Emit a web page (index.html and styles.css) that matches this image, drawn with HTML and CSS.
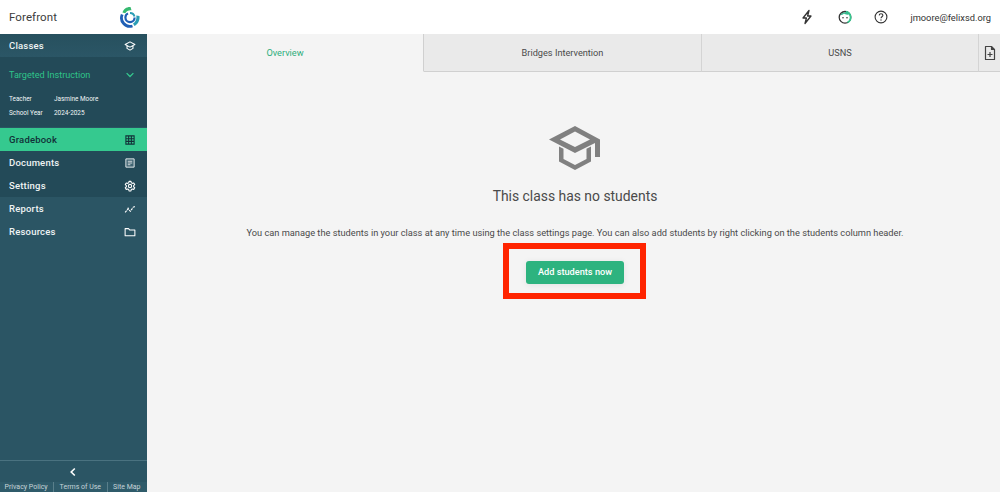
FILE: index.html
```html
<!DOCTYPE html>
<html lang="en">
<head>
<meta charset="utf-8">
<title>Forefront</title>
<link rel="stylesheet" href="styles.css">
</head>
<body>
<header class="topbar">
  <div class="brand">
    <span class="brand-name">Forefront</span>
    <svg class="logo" viewBox="0 0 22 22" width="22" height="22">
      <path d="M3.500 6.500C4.500 3 7.500 .8 11.500 1l1 3.200C9.500 3.900 7.500 5 6.300 7.200Z" fill="#35b96f"/>
      <path d="M3.200 8.500A8.500 8.500 0 0 0 13.500 20" fill="none" stroke="#1f5fb5" stroke-width="2.800"/>
      <circle cx="11" cy="11.500" r="4.600" fill="none" stroke="#1f5fb5" stroke-width="2.200" stroke-dasharray="19 10"/>
      <path d="M11 7a4.600 4.600 0 0 1 4.500 3.500" fill="none" stroke="#2a9db5" stroke-width="2"/>
      <path d="M15.500 20C19 18 21 14.500 20.500 10L17.300 9.400C18 13 16.500 16 14 17.500Z" fill="#2a9db5"/>
    </svg>
  </div>
  <div class="top-actions">
    <svg class="top-icon" viewBox="0 0 16 16"><path d="M10 1.500 4 9h3.400L6 14.500 12 7H8.600z" fill="none" stroke="#333" stroke-width="1.300" stroke-linejoin="round"/></svg>
    <svg class="top-icon top-icon-face" viewBox="0 0 16 16"><circle cx="8" cy="8.300" r="5.800" fill="none" stroke="#333" stroke-width="1.300"/><path d="M9 2.700A5.800 5.800 0 0 1 10.500 13.500" fill="none" stroke="#35c98f" stroke-width="1.700"/><path d="M3.400 6C5 3 10 1.800 12.800 5.300 10 6.200 8 5.500 7 4.500 6 5.700 4.800 6 3.400 6Z" fill="#35b98f"/><circle cx="6" cy="8.800" r=".8" fill="#333"/><circle cx="10" cy="8.800" r=".8" fill="#333"/></svg>
    <svg class="top-icon" viewBox="0 0 16 16"><circle cx="8" cy="8" r="5.900" fill="none" stroke="#333" stroke-width="1.100"/><path d="M6.200 6.400C6.300 5.300 7 4.700 8 4.700c1.100 0 1.900.7 1.900 1.600 0 1.400-1.900 1.500-1.900 3" fill="none" stroke="#333" stroke-width="1.100"/><circle cx="8" cy="11" r=".7" fill="#333"/></svg>
    <span class="user">jmoore@felixsd.org</span>
  </div>
</header>
<div class="shell">
  <aside class="sidebar">
    <nav class="nav">
      <a class="nav-row nav-classes">Classes
        <svg class="nav-icon" viewBox="0 0 16 16"><path d="M8 2.500 1.500 6 8 9.500 14.500 6z M4 7.500v3.700L8 13.500l4-2.300V7.500" fill="none" stroke="#fff" stroke-width="1.400" stroke-linejoin="round"/></svg>
      </a>
      <section class="class-block">
        <div class="class-title">Targeted Instruction
          <svg class="nav-icon" viewBox="0 0 16 16"><path d="M3.500 5.500 8 10l4.500-4.500" fill="none" stroke="#35c98f" stroke-width="1.700"/></svg>
        </div>
        <dl class="meta">
          <dt>Teacher</dt><dd>Jasmine Moore</dd>
          <dt>School Year</dt><dd>2024-2025</dd>
        </dl>
      </section>
      <a class="nav-row nav-active">Gradebook
        <svg class="nav-icon" viewBox="0 0 16 16"><path d="M2.500 2.500h11v11h-11z M2.500 6.200h11 M2.500 9.800h11 M6.200 2.500v11 M9.800 2.500v11" fill="none" stroke="#123038" stroke-width="1.400"/></svg>
      </a>
      <a class="nav-row nav-dark">Documents
        <svg class="nav-icon" viewBox="0 0 16 16"><path d="M2.500 2.500h11v11h-11z" fill="#3f6472" stroke="#e6ecee" stroke-width="1.300"/><path d="M5 5.700h6M5 8h6M5 10.300h3.500" stroke="#fff" stroke-width="1"/></svg>
      </a>
      <a class="nav-row nav-dark">Settings
        <svg class="nav-icon" viewBox="0 0 16 16"><path d="M6.700 1.800h2.600l.4 1.900 1.400.8 1.900-.6 1.300 2.200-1.500 1.300v1.600l1.500 1.300-1.300 2.200-1.900-.6-1.400.8-.4 1.900H6.700l-.4-1.900-1.400-.8-1.900.6-1.300-2.200 1.500-1.300V7.400L1.700 6.100 3 3.900l1.900.6 1.400-.8z" fill="none" stroke="#fff" stroke-width="1.400" stroke-linejoin="round"/><circle cx="8" cy="8" r="2.200" fill="none" stroke="#fff" stroke-width="1.400"/></svg>
      </a>
      <a class="nav-row">Reports
        <svg class="nav-icon" viewBox="0 0 16 16"><path d="M1.500 12.500 5.500 8l3 3 4-5.500" fill="none" stroke="#fff" stroke-width="1.500" stroke-dasharray="3 1"/><circle cx="5.500" cy="7" r="1" fill="#fff"/><circle cx="13.500" cy="5" r="1.100" fill="#fff"/></svg>
      </a>
      <a class="nav-row">Resources
        <svg class="nav-icon" viewBox="0 0 16 16"><path d="M1.500 3.500h4.500l1.500 1.700h7v7.800h-13z" fill="none" stroke="#fff" stroke-width="1.400" stroke-linejoin="round"/></svg>
      </a>
    </nav>
    <div class="side-foot">
      <div class="collapse"><svg viewBox="0 0 10 10" width="10" height="10"><path d="M6.800 1.500 3.200 5l3.600 3.500" fill="none" stroke="#fff" stroke-width="1.600"/></svg></div>
      <div class="legal"><span>Privacy Policy</span><span>Terms of Use</span><span>Site Map</span></div>
    </div>
  </aside>
  <main class="main">
    <div class="tabs">
      <div class="tab tab-active">Overview</div>
      <div class="tab">Bridges Intervention</div>
      <div class="tab">USNS</div>
      <div class="tab tab-add">
        <svg viewBox="0 0 16 16" width="16" height="16"><path d="M3.500 1.500h6l3 3v10h-9z M9.500 1.500v3h3 M8 7v5 M5.500 9.500h5" fill="none" stroke="#444" stroke-width="1.200" stroke-linejoin="round"/></svg>
      </div>
    </div>
    <div class="empty">
      <svg class="cap" viewBox="0 0 52 44" width="52" height="44">
        <path d="M26 0 0 13.500 26 27l20-10v14h5V13.500z M26 5.500 11 13.500 26 21l15-7.500z" fill="#808080" fill-rule="evenodd"/>
        <path d="M10 20.500v15L26 44l16-8.500v-15l-4.500 2.300v10.200L26 39 14.500 33V22.800z" fill="#808080"/>
      </svg>
      <h1 class="empty-title">This class has no students</h1>
      <p class="empty-text">You can manage the students in your class at any time using the class settings page. You can also add students by right clicking on the students column header.</p>
      <div class="callout"><button class="add-btn">Add students now</button></div>
    </div>
  </main>
</div>
</body>
</html>
```
FILE: styles.css
```css
* { box-sizing: border-box; }
html, body { margin: 0; height: 100%; }
body {
  width: 1000px;
  height: 492px;
  overflow: hidden;
  display: flex;
  flex-direction: column;
  font-family: Roboto, "Liberation Sans", sans-serif;
  color: #444;
  background: #f4f4f4;
}
.topbar {
  height: 34px;
  flex: none;
  background: #fff;
  display: flex;
  align-items: center;
  justify-content: space-between;
  padding: 0 9px;
}
.brand { width: 132px; display: flex; align-items: center; justify-content: space-between; }
.brand-name { font-size: 11.500px; color: #3c3c3c; letter-spacing: .1px; }
.logo { display: block; }
.top-actions { display: flex; align-items: center; }
.top-icon { width: 16px; height: 16px; margin-right: 21px; }
.top-icon:first-child { margin-right: 22px; }
.top-icon-face { margin-right: 20px; }
.user { font-size: 9.300px; color: #333; }
.shell { flex: 1; display: flex; min-height: 0; }
.sidebar {
  width: 147px;
  flex: none;
  background: #2b5564;
  display: flex;
  flex-direction: column;
  justify-content: space-between;
  color: #fff;
}
.nav-row {
  height: 23px;
  display: flex;
  align-items: center;
  justify-content: space-between;
  padding: 0 11px 0 9px;
  font-size: 9.500px;
  font-weight: 500;
  letter-spacing: .2px;
  color: #eef3f4;
}
.nav-icon { width: 12px; height: 12px; flex: none; }
.nav-classes { background: linear-gradient(#27505e, #2b5666); }
.class-block { height: 71px; background: #234a58; padding-top: 6px; border-bottom: 1px solid #2a5563; }
.class-title {
  display: flex;
  justify-content: space-between;
  align-items: center;
  padding: 0 11px 0 9px;
  height: 23px;
  font-size: 9.100px;
  color: #2fc48a;
}
.meta {
  margin: 9px 0 0 9px;
  display: grid;
  grid-template-columns: 45px 1fr;
  row-gap: 6px;
  font-size: 6.400px;
  line-height: 8px;
  color: #f2f6f7;
}
.meta dt, .meta dd { margin: 0; }
.nav-active { background: #35c98f; color: #123038; }
.nav-dark { background: #234a58; }
.side-foot { display: flex; flex-direction: column; }
.collapse {
  height: 22px;
  border-top: 1px solid #4a7280;
  display: flex;
  align-items: center;
  justify-content: center;
  padding-right: 2px;
}
.legal {
  height: 10px;
  background: #2f5b6a;
  display: flex;
  justify-content: center;
  padding-right: 2px;
  font-size: 7px;
  line-height: 10px;
  color: #c5d3d8;
  white-space: nowrap;
}
.legal span { padding: 0 5.500px; border-left: 1px solid #5a7f8b; }
.legal span:first-child { border-left: 0; }
.main { flex: 1; min-width: 0; display: flex; flex-direction: column; }
.tabs { height: 38px; flex: none; display: flex; }
.tab {
  width: 278px;
  display: flex;
  align-items: center;
  justify-content: center;
  font-size: 9.200px;
  color: #4a4a4a;
  background: #eaeaea;
  border-right: 1px solid #d4d4d4;
  border-bottom: 1px solid #d0d0d0;
}
.tab-active { width: 277px; background: #f4f4f4; color: #2fae7c; border-bottom-color: transparent; border-right: 1px solid #d0d0d0; }
.tab:nth-child(3) { width: 277px; }
.tab:last-child { width: 21px; flex: none; border-right: 0; padding-left: 1px; }
.empty { display: flex; flex-direction: column; align-items: center; padding: 54px 0 0 3px; }
.cap { display: block; }
.empty-title { margin: 18px 0 0; font-size: 13.900px; line-height: 17px; font-weight: 400; color: #4a4a4a; }
.empty-text { margin: 22px 0 0; font-size: 9.250px; line-height: 12px; color: #4a4a4a; white-space: nowrap; }
.callout {
  margin: 4px 2px 0 0;
  width: 143px;
  height: 56px;
  border: 6px solid #ff2400;
  display: flex;
  align-items: center;
  justify-content: center;
  padding: 3px 0 0 2px;
}
.add-btn {
  width: 98px;
  height: 23px;
  border: 0;
  border-radius: 3px;
  background: #2db37f;
  color: #fff;
  font: 500 9.200px Roboto, sans-serif;
  box-shadow: 0 1px 6px rgba(0,0,0,.08);
  padding: 0 0 2px;
}
```
